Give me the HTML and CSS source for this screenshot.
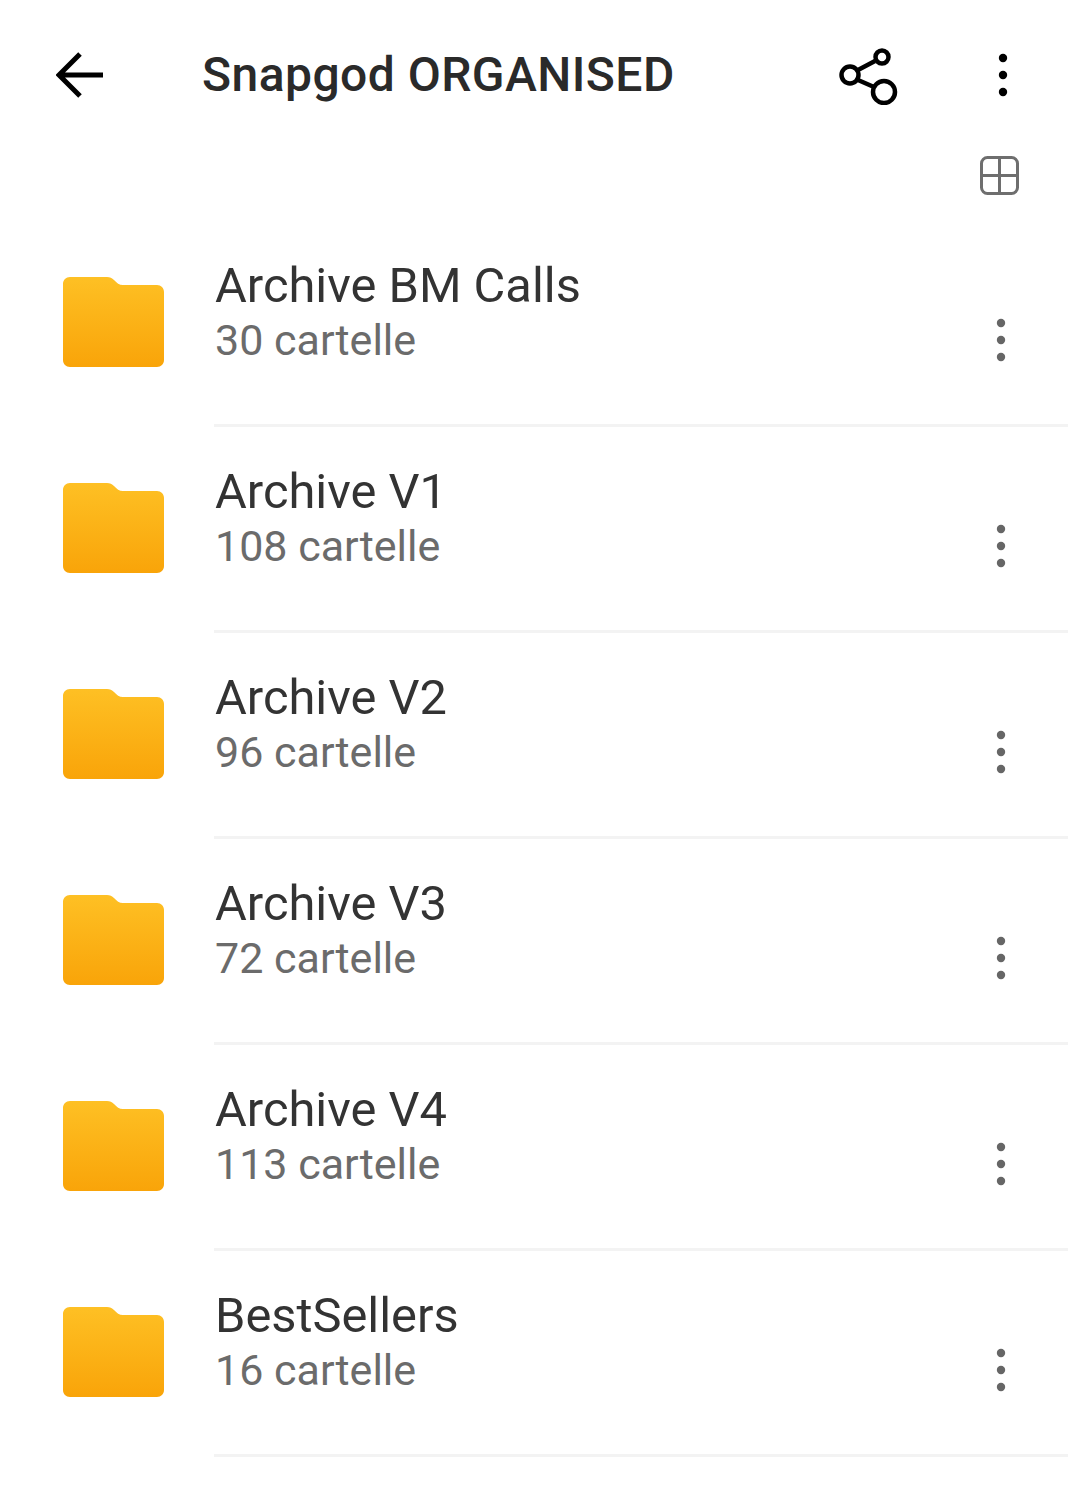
FILE: index.html
```html
<!DOCTYPE html>
<html lang="it">
<head>
  <meta charset="UTF-8">
  <meta name="viewport" content="width=device-width, initial-scale=1.0">
  <title>Snapgod ORGANISED</title>
  <link rel="stylesheet" href="styles.css">
</head>
<body>
  <svg class="defs" width="0" height="0">
    <defs>
      <linearGradient id="folderFill" x1="0" y1="0" x2="0" y2="1">
        <stop offset="0" stop-color="#fec024"/>
        <stop offset="1" stop-color="#f9a409"/>
      </linearGradient>
      <symbol id="folder" viewBox="0 0 101 90">
        <path fill="url(#folderFill)" d="M7 0H44C47 0 49 1 51 3C54 6 56 8 60 8H94C98 8 101 11 101 15V83C101 87 98 90 94 90H7C3 90 0 87 0 83V7C0 3 3 0 7 0Z"/>
      </symbol>
      <symbol id="dots" viewBox="0 0 10 44">
        <circle cx="5" cy="5" r="4.2"/>
        <circle cx="5" cy="22" r="4.2"/>
        <circle cx="5" cy="39" r="4.2"/>
      </symbol>
    </defs>
  </svg>

  <header class="topbar">
    <svg class="back" width="48" height="46" viewBox="0 0 48 46">
      <path d="M24 2L3 23L24 44M3 23H47"/>
    </svg>
    <h1 class="title">Snapgod ORGANISED</h1>
    <svg class="share" width="60" height="60" viewBox="0 0 60 60">
      <circle cx="44" cy="12" r="6.500"/>
      <circle cx="12" cy="30" r="8.500"/>
      <circle cx="46" cy="47" r="11"/>
      <path d="M20 25L37 16M20 35L36 42"/>
    </svg>
    <svg class="more" width="10" height="44"><use href="#dots"/></svg>
  </header>

  <div class="view-row">
    <svg class="grid-icon" width="39" height="39" viewBox="0 0 39 39">
      <rect x="1.5" y="1.5" width="36" height="36" rx="6"/>
      <path d="M19.500 1.500V37.500M1.500 19.500H37.500"/>
    </svg>
  </div>

  <ul class="folder-list">
    <li class="folder-row">
      <svg class="folder-icon" width="101" height="90"><use href="#folder"/></svg>
      <div class="folder-text">
        <div class="folder-name">Archive BM Calls</div>
        <div class="folder-count">30 cartelle</div>
      </div>
      <svg class="row-more" width="10" height="44"><use href="#dots"/></svg>
    </li>
    <li class="folder-row">
      <svg class="folder-icon" width="101" height="90"><use href="#folder"/></svg>
      <div class="folder-text">
        <div class="folder-name">Archive V1</div>
        <div class="folder-count">108 cartelle</div>
      </div>
      <svg class="row-more" width="10" height="44"><use href="#dots"/></svg>
    </li>
    <li class="folder-row">
      <svg class="folder-icon" width="101" height="90"><use href="#folder"/></svg>
      <div class="folder-text">
        <div class="folder-name">Archive V2</div>
        <div class="folder-count">96 cartelle</div>
      </div>
      <svg class="row-more" width="10" height="44"><use href="#dots"/></svg>
    </li>
    <li class="folder-row">
      <svg class="folder-icon" width="101" height="90"><use href="#folder"/></svg>
      <div class="folder-text">
        <div class="folder-name">Archive V3</div>
        <div class="folder-count">72 cartelle</div>
      </div>
      <svg class="row-more" width="10" height="44"><use href="#dots"/></svg>
    </li>
    <li class="folder-row">
      <svg class="folder-icon" width="101" height="90"><use href="#folder"/></svg>
      <div class="folder-text">
        <div class="folder-name">Archive V4</div>
        <div class="folder-count">113 cartelle</div>
      </div>
      <svg class="row-more" width="10" height="44"><use href="#dots"/></svg>
    </li>
    <li class="folder-row">
      <svg class="folder-icon" width="101" height="90"><use href="#folder"/></svg>
      <div class="folder-text">
        <div class="folder-name">BestSellers</div>
        <div class="folder-count">16 cartelle</div>
      </div>
      <svg class="row-more" width="10" height="44"><use href="#dots"/></svg>
    </li>
  </ul>
</body>
</html>
```

FILE: styles.css
```css
body {
  margin: 0;
  background-color: #fff;
  font-family: Roboto, "Noto Sans", sans-serif;
  overflow: hidden;
}
.defs {
  display: block;
  height: 0;
}
.topbar {
  display: flex;
  align-items: center;
  height: 150px;
  padding: 0 72px 0 56px;
  box-sizing: border-box;
}
.back {
  fill: none;
  stroke: #000;
  stroke-width: 5;
  flex-shrink: 0;
}
.title {
  flex: 1;
  margin: 0 0 2px 98px;
  font-size: 48px;
  font-weight: 500;
  letter-spacing: 0.45px;
  color: #2a2a2a;
  white-space: nowrap;
}
.share {
  fill: none;
  stroke: #000;
  stroke-width: 4.5;
  flex-shrink: 0;
}
.more {
  fill: #000;
  margin-left: 100px;
}
.view-row {
  display: flex;
  justify-content: flex-end;
  height: 71px;
  padding-right: 61px;
  margin-top: 6px;
  margin-bottom: -6px;
}
.grid-icon {
  fill: none;
  stroke: #6e6e6e;
  stroke-width: 3;
}
.folder-list {
  list-style: none;
  margin: 0;
  padding: 0;
}
.folder-row {
  display: flex;
  align-items: center;
  height: 206px;
  padding-left: 63px;
  padding-right: 74px;
  position: relative;
  box-sizing: border-box;
}
.folder-row::after {
  content: "";
  position: absolute;
  left: 214px;
  right: 12px;
  bottom: 0;
  height: 3px;
  background-color: #f3f3f3;
}
.folder-icon {
  flex-shrink: 0;
  margin-top: -4px;
}
.folder-text {
  flex: 1;
  margin-left: 51px;
  margin-top: -23px;
}
.folder-name {
  font-size: 48.8px;
  line-height: 56px;
  color: #333;
}
.folder-count {
  font-size: 43px;
  line-height: 54px;
  margin-top: -1px;
  color: #6b6b6b;
}
.row-more {
  fill: #666;
  flex-shrink: 0;
  margin-top: 32px;
}
```
